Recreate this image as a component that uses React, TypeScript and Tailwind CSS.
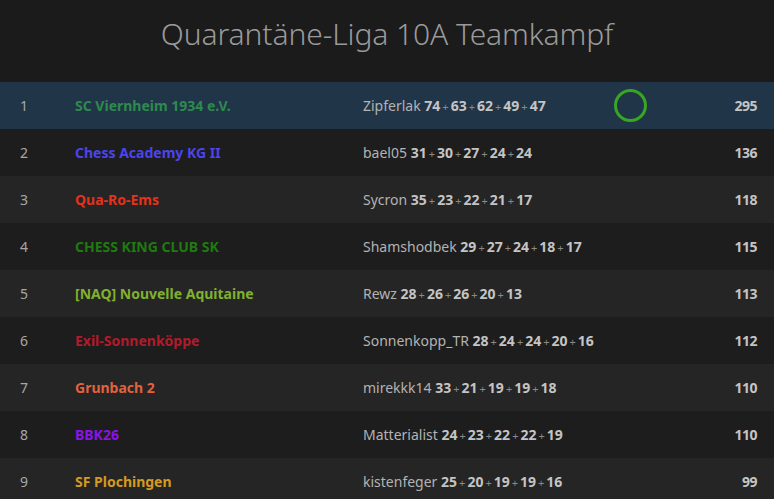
const rows = [
  { rank: 1, team: 'SC Viernheim 1934 e.V.', color: 'text-[#2d8a4e]', player: 'Zipferlak', pts: [74, 63, 62, 49, 47], total: 295, me: true },
  { rank: 2, team: 'Chess Academy KG II', color: 'text-[#4b44f0]', player: 'bael05', pts: [31, 30, 27, 24, 24], total: 136 },
  { rank: 3, team: 'Qua-Ro-Ems', color: 'text-[#e6311b]', player: 'Sycron', pts: [35, 23, 22, 21, 17], total: 118 },
  { rank: 4, team: 'CHESS KING CLUB SK', color: 'text-[#1f7a10]', player: 'Shamshodbek', pts: [29, 27, 24, 18, 17], total: 115 },
  { rank: 5, team: '[NAQ] Nouvelle Aquitaine', color: 'text-[#80b12e]', player: 'Rewz', pts: [28, 26, 26, 20, 13], total: 113 },
  { rank: 6, team: 'Exil-Sonnenköppe', color: 'text-[#b21b2c]', player: 'Sonnenkopp_TR', pts: [28, 24, 24, 20, 16], total: 112 },
  { rank: 7, team: 'Grunbach 2', color: 'text-[#e0623f]', player: 'mirekkk14', pts: [33, 21, 19, 19, 18], total: 110 },
  { rank: 8, team: 'BBK26', color: 'text-[#8a14e6]', player: 'Matterialist', pts: [24, 23, 22, 22, 19], total: 110 },
  { rank: 9, team: 'SF Plochingen', color: 'text-[#d49a1f]', player: 'kistenfeger', pts: [25, 20, 19, 19, 16], total: 99 },
];

export default function App() {
  return (
    <div className="w-[774px] h-[499px] overflow-hidden bg-[#1b1b1b] font-['Noto_Sans',sans-serif]">
      <div className="h-[82px] flex items-center justify-center pb-[16px]">
        <h1 className="text-[30px] font-light text-[#9a9a9a] tracking-[-0.1px]">Quarantäne-Liga 10A Teamkampf</h1>
      </div>
      <div className="flex flex-col">
        {rows.map((r, i) => (
          <div
            key={r.rank}
            className={
              'h-[47px] flex items-center text-[14px] ' +
              (r.me ? 'bg-[#213548]' : i % 2 === 1 ? 'bg-[#1d1d1d]' : 'bg-[#252525]')
            }
          >
            <div className="w-[75px] pl-[20px] text-[#a8a8a8]">{r.rank}</div>
            <div className={'w-[288px] font-bold ' + r.color}>{r.team}</div>
            <div className="w-[250px] text-[#b3b3b3]">
              {r.player}{' '}
              {r.pts.map((p, j) => (
                <span key={j}>
                  {j > 0 && <span className="text-[11px] text-[#8a8a8a] mx-[2px]">+</span>}
                  <span className="font-bold text-[#c4c4c4]">{p}</span>
                </span>
              ))}
            </div>
            <div className="w-[34px] flex justify-center">
              {r.me && <div className="shrink-0 w-[33px] h-[33px] rounded-full border-[3px] border-[#36a624]" />}
            </div>
            <div className="flex-1 text-right pr-[17px] font-bold tracking-[-0.5px] text-[#c4c4c4]">{r.total}</div>
          </div>
        ))}
      </div>
    </div>
  );
}
